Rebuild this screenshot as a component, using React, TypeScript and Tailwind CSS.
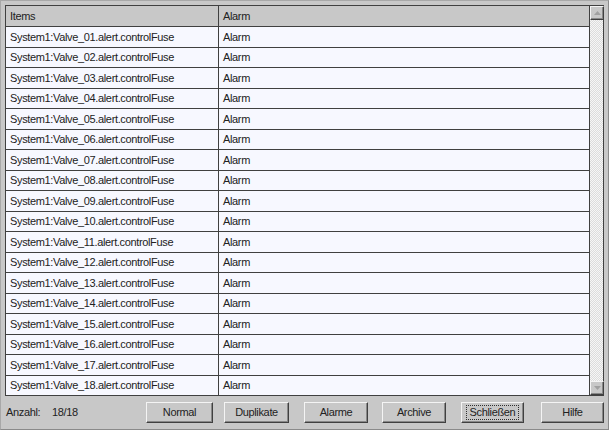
import React from "react";

const rows = Array.from({ length: 18 }, (_, i) => `System1:Valve_${String(i + 1).padStart(2, "0")}.alert.controlFuse`);

function ScrollBtn({ up }: { up?: boolean }) {
  return (
    <div className="w-[14px] h-[14px] bg-[#c8c8c8] border-t border-l border-t-[#f4f4f4] border-l-[#f4f4f4] border-r border-b border-r-[#404040] border-b-[#404040] shadow-[inset_-1px_-1px_0_#888888] flex items-center justify-center">
      <svg width="7" height="4" viewBox="0 0 7 4">
        {up ? (
          <polygon points="3.5,0 7,4 0,4" fill="#a0a0a0" />
        ) : (
          <polygon points="0,0 7,0 3.5,4" fill="#a0a0a0" />
        )}
      </svg>
    </div>
  );
}

function Btn({ label, w, ml, focus }: { label: string; w: string; ml?: string; focus?: boolean }) {
  return (
    <div
      className={`${w} ${ml ?? ""} h-[21px] bg-[#c8c8c8] border-t border-l border-t-[#f4f4f4] border-l-[#f4f4f4] border-r border-b border-r-[#404040] border-b-[#404040] shadow-[inset_-1px_-1px_0_#888888] flex items-center justify-center text-[#222222]`}
    >
      {focus ? (
        <span className="border border-dotted border-[#303030] px-[3px] leading-[13px]">{label}</span>
      ) : (
        <span>{label}</span>
      )}
    </div>
  );
}

export default function App() {
  return (
    <div className="w-[609px] h-[430px] bg-[#c8c8c8] border border-[#a8a8a8] border-r-[#8a8a8a] border-b-[#8a8a8a] flex flex-col font-['Liberation_Sans',Arial,sans-serif] text-[11px] tracking-[-0.35px] text-[#222222] overflow-hidden">
      <div className="mt-[4px] ml-[4px] w-[599px] h-[391px] border border-[#404040] flex">
        <div className="flex-1 flex flex-col">
          <div className="h-[21px] flex border-b border-[#404040] bg-[#c8c8c8]">
            <div className="w-[213px] border-r border-[#404040] pl-[4px] flex items-center">Items</div>
            <div className="flex-1 pl-[4px] flex items-center">Alarm</div>
          </div>
          <div className="flex-1 flex flex-col bg-[#f7f8ff]">
            {rows.map((r, i) => (
              <div
                key={r}
                className={`flex-1 flex ${i < rows.length - 1 ? "border-b border-[#404040]" : ""}`}
              >
                <div className="w-[213px] border-r border-[#404040] pl-[4px] flex items-center whitespace-nowrap">{r}</div>
                <div className="flex-1 pl-[4px] flex items-center">Alarm</div>
              </div>
            ))}
          </div>
        </div>
        <div className="w-[14px] flex flex-col border-l border-[#404040] bg-[repeating-conic-gradient(#dcdcdc_0%_25%,#f6f6f6_0%_50%)] bg-[length:2px_2px]">
          <ScrollBtn up />
          <div className="flex-1" />
          <ScrollBtn />
        </div>
      </div>
      <div className="flex-1 flex items-center pl-[5px]">
        <span className="w-[46px]">Anzahl:</span>
        <span className="w-[94px]">18/18</span>
        <Btn label="Normal" w="w-[67px]" />
        <Btn label="Duplikate" w="w-[65px]" ml="ml-[11px]" />
        <Btn label="Alarme" w="w-[64px]" ml="ml-[15px]" />
        <Btn label="Archive" w="w-[64px]" ml="ml-[14px]" />
        <Btn label="Schließen" w="w-[63px]" ml="ml-[15px]" focus />
        <Btn label="Hilfe" w="w-[63px]" ml="ml-[17px]" />
      </div>
    </div>
  );
}
